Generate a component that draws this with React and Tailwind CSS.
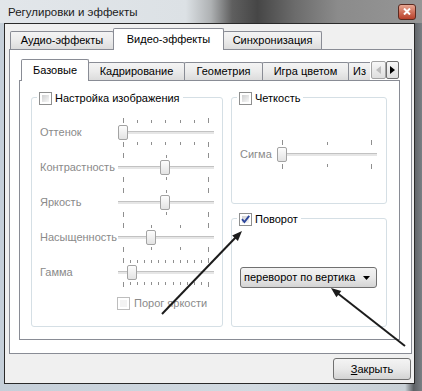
import React from "react";

const GRAY = "text-[#8a8a8a]";

function Checkbox({ checked = false, disabled = false }) {
  return (
    <div
      className={`relative w-[13px] h-[13px] shrink-0 border bg-white p-[2px] ${
        disabled ? "border-[#bdbdbd]" : "border-[#8e8f8f]"
      }`}
    >
      <div
        className={`w-full h-full ${
          disabled
            ? "bg-[#f3f3f3]"
            : "bg-gradient-to-br from-[#cfd0d1] to-[#f8f8f8]"
        }`}
      />
      {checked && (
        <svg className="absolute left-0 top-0" width="11" height="11" viewBox="0 0 11 11">
          <path d="M2 5.2 L4.4 8 L9.2 1.8" fill="none" stroke="#2d469c" strokeWidth="1.9" />
        </svg>
      )}
    </div>
  );
}

function TickRow({ ticks, align }) {
  return (
    <div className={`flex justify-between px-[5px] h-[5px] ${align}`}>
      {Array.from({ length: ticks }).map((_, i) => (
        <div
          key={i}
          className={`w-px bg-[#8f8f8f] ${i === 0 || i === ticks - 1 ? "h-[5px]" : "h-[3px]"}`}
        />
      ))}
    </div>
  );
}

function Slider({ w, width, ticks, value }) {
  const left = Math.round(value * (width - 11));
  return (
    <div className={`${w} shrink-0 flex flex-col gap-[2px]`}>
      <TickRow ticks={ticks} align="items-end" />
      <div className="relative h-[15px]">
        <div className="absolute left-0 right-0 top-[6px] h-[3px] bg-[#e6e6e6] border-t border-[#c2c2c2]" />
        <div
          className="absolute top-0 w-[10px] h-[15px] rounded-[2px] border border-[#a3a3a3] bg-gradient-to-b from-[#fdfdfd] to-[#e3e3e3]"
          style={{ left }}
        />
      </div>
      <TickRow ticks={ticks} align="items-start" />
    </div>
  );
}

function SliderRow({ label, ticks, value }) {
  return (
    <div className="flex items-center h-[29px]">
      <div className={`w-[78px] shrink-0 whitespace-nowrap ${GRAY}`}>{label}</div>
      <Slider w="w-[96px]" width={96} ticks={ticks} value={value} />
    </div>
  );
}

function GroupHeader({ label, checked }) {
  return (
    <div className="-mt-[6px] ml-[5px] w-fit bg-white px-[2px] flex items-center gap-[3px] h-[13px]">
      <Checkbox checked={checked} />
      <span className="pr-[1px]">{label}</span>
    </div>
  );
}

function Tab({ label, selected, className = "" }) {
  return selected ? (
    <div
      className={`relative z-10 -mb-px h-[22px] bg-white border border-b-0 border-[#898c95] rounded-t-[2px] flex items-center justify-center ${className}`}
    >
      {label}
    </div>
  ) : (
    <div
      className={`h-[18px] border border-b-0 border-[#898c95] rounded-t-[2px] bg-gradient-to-b from-[#f4f4f4] via-[#ebebeb] to-[#dcdcdc] flex items-center justify-center ${className}`}
    >
      {label}
    </div>
  );
}

export default function App() {
  return (
    <div className="relative w-[422px] h-[391px] overflow-hidden flex flex-col bg-[linear-gradient(90deg,#c5cfd9_0%,#d2dae1_60%,#c8d0d6_96%,#5d6165_98%,#7a7f84_100%)] font-['Liberation_Sans',Arial,sans-serif] text-[11px] leading-none text-black">
      {/* Title bar */}
      <div className="h-[23px] shrink-0 flex items-center justify-between pl-[8px] pr-[6px] bg-[linear-gradient(90deg,#e2e6ea_0%,#dce1e5_44%,#aeb1b3_50%,#5f5f5f_55%,#464646_61%,#6c6c6c_70%,#8b8b8b_80%,#969696_100%)]">
        <span className="mt-[2px] text-[11.5px] text-[#1b1b1b]">Регулировки и эффекты</span>
        <div className="w-[18px] h-[16px] rounded-[3px] border border-[#5b2a20] bg-gradient-to-b from-[#e6a793] via-[#d0705a] to-[#b8412b] flex items-center justify-center">
          <svg width="8" height="7" viewBox="0 0 8 7">
            <path d="M1 0.5 L7 6.5 M7 0.5 L1 6.5" stroke="#ffffff" strokeWidth="2" />
          </svg>
        </div>
      </div>

      {/* Client area */}
      <div className="flex-1 flex pl-[4px] pr-[7px] pb-[7px]">
        <div className="flex-1 flex flex-col border border-[#2a2a2a] bg-[#f0f0f0] pl-[4px] pr-[2px]">
          {/* outer tabs */}
          <div className="h-[25px] shrink-0 flex items-end pl-[1px]">
            <Tab label="Аудио-эффекты" className="w-[104px]" />
            <Tab label="Видео-эффекты" selected className="w-[111px] -ml-px" />
            <Tab label="Синхронизация" className="w-[99px] -ml-px" />
          </div>

          {/* outer panel */}
          <div className="h-[305px] shrink-0 border border-[#898c95] bg-white flex flex-col pl-[9px] pr-[11px] pb-[13px]">
            {/* inner tabs */}
            <div className="h-[30px] shrink-0 flex items-end pl-[2px]">
              <Tab label="Базовые" selected className="w-[68px]" />
              <div className="w-[282px] -ml-px h-[18px] flex overflow-hidden">
                <Tab label="Кадрирование" className="w-[97px] shrink-0" />
                <Tab label="Геометрия" className="w-[79px] -ml-px shrink-0" />
                <Tab label="Игра цветом" className="w-[87px] -ml-px shrink-0" />
                <div className="w-[60px] -ml-px shrink-0 h-[18px] border border-b-0 border-[#898c95] rounded-t-[2px] bg-gradient-to-b from-[#f4f4f4] via-[#ebebeb] to-[#dcdcdc] flex items-center pl-[4px]">
                  Из
                </div>
              </div>
              <div className="flex mb-[1px] ml-[1px]">
                <div className="w-[15px] h-[18px] border border-[#a3a3a3] rounded-[2px] bg-gradient-to-b from-[#f7f7f7] to-[#dedede] flex items-center justify-center">
                  <svg width="5" height="8" viewBox="0 0 5 8">
                    <path d="M5 0 L0 4 L5 8Z" fill="#bcbcbc" />
                  </svg>
                </div>
                <div className="w-[13px] h-[18px] border border-[#707070] rounded-[2px] bg-gradient-to-b from-[#f7f7f7] to-[#dedede] flex items-center justify-center">
                  <svg width="5" height="8" viewBox="0 0 5 8">
                    <path d="M0 0 L5 4 L0 8Z" fill="#000000" />
                  </svg>
                </div>
              </div>
            </div>

            {/* inner panel */}
            <div className="flex-1 border border-[#898c95] bg-white flex gap-[8px] pt-[16px] pl-[11px] pr-[12px] pb-[12px]">
              {/* left group */}
              <div className="w-[192px] h-[230px] shrink-0 border border-[#d5dfe5] rounded-[3px] flex flex-col">
                <GroupHeader label="Настройка изображения" />
                <div className="flex flex-col gap-[6px] mt-[13px] pl-[8px]">
                  <SliderRow label="Оттенок" ticks={7} value={0} />
                  <SliderRow label="Контрастность" ticks={3} value={0.49} />
                  <SliderRow label="Яркость" ticks={3} value={0.49} />
                  <SliderRow label="Насыщенность" ticks={4} value={0.335} />
                  <SliderRow label="Гамма" ticks={13} value={0.1} />
                </div>
                <div className="mt-[10px] pl-[85px] flex items-center gap-[4px]">
                  <Checkbox disabled />
                  <span className={GRAY}>Порог яркости</span>
                </div>
              </div>

              {/* right column */}
              <div className="w-[156px] shrink-0 flex flex-col gap-[14px]">
                <div className="h-[107px] border border-[#d5dfe5] rounded-[3px] flex flex-col">
                  <GroupHeader label="Четкость" />
                  <div className="mt-[35px] pl-[8px] flex items-center h-[29px]">
                    <div className={`w-[37px] shrink-0 ${GRAY}`}>Сигма</div>
                    <Slider w="w-[100px]" width={100} ticks={3} value={0} />
                  </div>
                </div>
                <div className="h-[109px] border border-[#d5dfe5] rounded-[3px] flex flex-col">
                  <GroupHeader label="Поворот" checked />
                  <div className="mt-[41px] ml-[8px] w-[137px] h-[21px] rounded-[3px] border border-[#707070] bg-gradient-to-b from-[#f3f3f3] via-[#e9e9e9] to-[#d4d4d4] flex items-center justify-between pl-[3px] pr-[6px]">
                    <span className="whitespace-nowrap">переворот по вертика</span>
                    <svg width="7" height="4" viewBox="0 0 7 4" className="shrink-0">
                      <path d="M0 0 L7 0 L3.5 4Z" fill="#000" />
                    </svg>
                  </div>
                </div>
              </div>
            </div>
          </div>

          {/* bottom bar */}
          <div className="flex-1 flex justify-end items-start pt-[4px] pr-[1px]">
            <div className="w-[78px] h-[22px] rounded-[3px] border border-[#707070] bg-gradient-to-b from-[#f4f4f4] via-[#e9e9e9] to-[#d3d3d3] flex items-center justify-center">
              <span>
                <span className="underline">З</span>акрыть
              </span>
            </div>
          </div>
        </div>
      </div>

      {/* annotation arrows */}
      <svg className="absolute left-0 top-0 pointer-events-none" width="422" height="391" viewBox="0 0 422 391">
        <line x1="162" y1="314" x2="237" y2="236" stroke="#1c1c1c" strokeWidth="2" />
        <polygon points="242,231 237.9,241.0 232.2,235.4" fill="#1c1c1c" />
        <line x1="405" y1="346" x2="336" y2="292" stroke="#1c1c1c" strokeWidth="2" />
        <polygon points="331,288 341.3,291.0 336.4,297.3" fill="#1c1c1c" />
      </svg>
    </div>
  );
}
